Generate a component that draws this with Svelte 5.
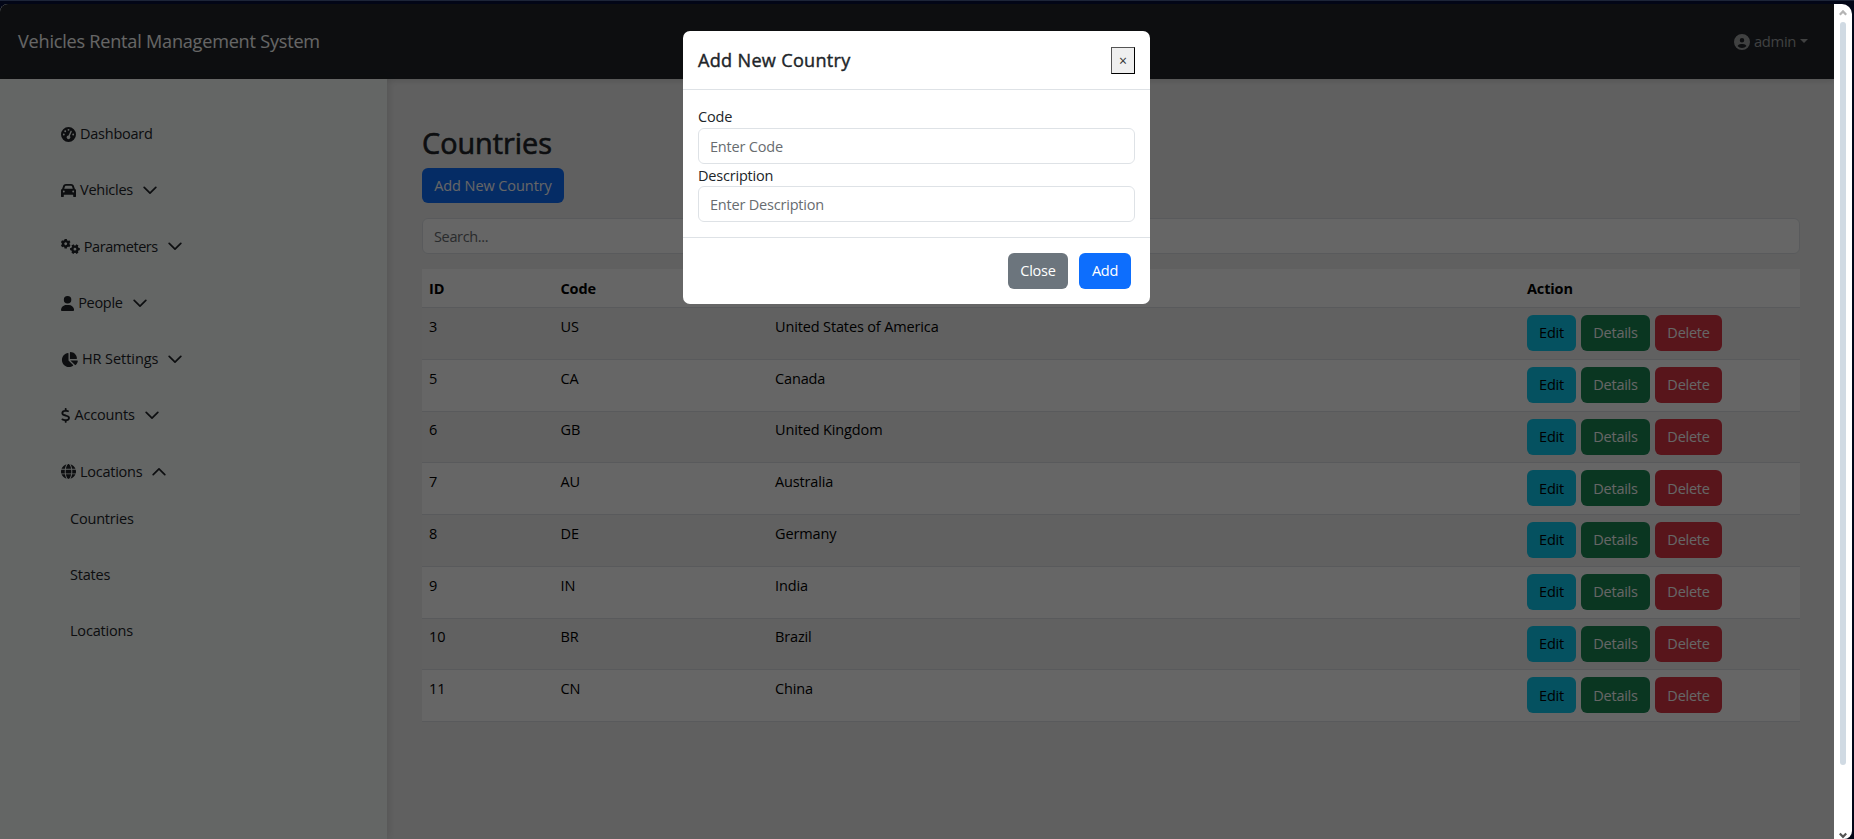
<script>
  const icons = {
    gauge: { w: 512, d: 'M0 256a256 256 0 1 1 512 0A256 256 0 1 1 0 256zM288 96a32 32 0 1 0 -64 0 32 32 0 1 0 64 0zM256 416c35.3 0 64-28.7 64-64c0-17.4-6.9-33.1-18.1-44.6L366 161.7c5.3-12.1-.2-26.3-12.3-31.6s-26.3 .2-31.6 12.3L257.9 288c-.6 0-1.3 0-1.9 0c-35.3 0-64 28.7-64 64s28.7 64 64 64zM176 144a32 32 0 1 0 -64 0 32 32 0 1 0 64 0zM96 288a32 32 0 1 0 0-64 32 32 0 1 0 0 64zm352-32a32 32 0 1 0 -64 0 32 32 0 1 0 64 0z' },
    car: { w: 512, d: 'M135.2 117.4L109.1 192H402.9l-26.1-74.6C372.3 104.6 360.2 96 346.6 96H165.4c-13.6 0-25.7 8.6-30.2 21.4zM39.6 196.8L74.8 96.3C88.3 57.8 124.6 32 165.4 32H346.6c40.8 0 77.1 25.8 90.6 64.3l35.2 100.5c23.2 9.6 39.6 32.5 39.6 59.2V400v48c0 17.7-14.3 32-32 32H448c-17.7 0-32-14.3-32-32V400H96v48c0 17.7-14.3 32-32 32H32c-17.7 0-32-14.3-32-32V400 256c0-26.7 16.4-49.6 39.6-59.2zM128 288a32 32 0 1 0 -64 0 32 32 0 1 0 64 0zm288 32a32 32 0 1 0 0-64 32 32 0 1 0 0 64z' },
    gears: { w: 640 },
    user: { w: 448, d: 'M224 256A128 128 0 1 0 224 0a128 128 0 1 0 0 256zm-45.7 48C79.8 304 0 383.8 0 482.3C0 498.7 13.3 512 29.7 512H418.3c16.4 0 29.7-13.3 29.7-29.7C448 383.8 368.2 304 269.7 304H178.3z' },
    pie: { w: 576, d: 'M304 240V16.6c0-9 7-16.6 16-16.6C443.7 0 544 100.3 544 224c0 9-7.6 16-16.6 16H304zM32 272C32 150.7 122.1 50.3 239 34.3c9.2-1.3 17 6.1 17 15.4V288L412.5 444.5c6.7 6.7 6.2 17.7-1.5 23.1C371.8 495.6 323.8 512 272 512C139.5 512 32 404.6 32 272zm526.4 16c9.3 0 16.6 7.8 15.4 17c-7.7 55.9-34.6 105.6-73.9 142.3c-6 5.6-15.4 5.2-21.2-.7L320 288H558.4z' },
    dollar: { w: 320, d: 'M160 0c17.7 0 32 14.3 32 32V67.7c1.6 .2 3.1 .4 4.7 .7c.4 .1 .7 .1 1.1 .2l48 8.8c17.4 3.2 28.9 19.9 25.7 37.2s-19.9 28.9-37.2 25.7l-47.5-8.7c-31.3-4.6-58.9-1.5-78.3 6.2s-27.2 18.3-29 28.1c-2 10.7-.5 16.7 1.2 20.4c1.8 3.9 5.5 8.3 12.8 13.2c16.3 10.7 41.3 17.7 73.7 26.3l2.9 .8c28.6 7.6 63.6 16.8 89.6 33.8c14.2 9.3 27.6 21.9 35.9 39.5c8.5 17.9 10.3 37.9 6.4 59.2c-6.9 38-33.1 63.4-65.6 76.7c-13.7 5.6-28.6 9.2-44.4 11V480c0 17.7-14.3 32-32 32s-32-14.3-32-32V445.1c-.4-.1-.9-.1-1.3-.2l-.2 0 0 0c-24.4-3.8-64.5-14.3-91.5-26.3c-16.1-7.2-23.4-26.1-16.2-42.2s26.1-23.4 42.2-16.2c20.9 9.3 55.3 18.5 75.2 21.6c31.9 4.7 58.2 2 76-5.3c16.9-6.9 24.6-16.9 26.8-28.9c1.9-10.6 .4-16.7-1.3-20.4c-1.9-4-5.6-8.4-13-13.3c-16.4-10.7-41.5-17.7-74-26.3l-2.8-.7 0 0C119.4 279.3 84.4 270 58.4 253c-14.2-9.3-27.5-22-35.8-39.6c-8.4-17.9-10.1-37.9-6.1-59.2C23.7 116 52.3 91.2 84.8 78.3c13.3-5.3 27.9-8.9 43.2-11V32c0-17.7 14.3-32 32-32z' },
    globe: { w: 512, d: 'M352 256c0 22.2-1.2 43.6-3.3 64H163.3c-2.2-20.4-3.3-41.8-3.3-64s1.2-43.6 3.3-64H348.7c2.2 20.4 3.3 41.8 3.3 64zm28.8-64H503.9c5.3 20.5 8.1 41.9 8.1 64s-2.8 43.5-8.1 64H380.8c2.1-20.6 3.2-42 3.2-64s-1.1-43.4-3.2-64zm112.6-32H376.7c-10-63.9-29.8-117.4-55.3-151.6c78.3 20.7 142 77.5 171.9 151.6zm-149.1 0H167.7c6.1-36.4 15.5-68.6 27-94.7c10.5-23.6 22.2-40.7 33.5-51.5C239.4 3.2 248.7 0 256 0s16.6 3.2 27.8 13.8c11.3 10.8 23 27.9 33.5 51.5c11.6 26 20.9 58.2 27 94.7zm-209 0H18.6C48.6 85.9 112.2 29.1 190.6 8.4C165.1 42.6 145.3 96.1 135.3 160zM8.1 192H131.2c-2.1 20.6-3.2 42-3.2 64s1.1 43.4 3.2 64H8.1C2.8 299.5 0 278.1 0 256s2.8-43.5 8.1-64zM194.7 446.6c-11.6-26-20.9-58.2-27-94.6H344.3c-6.1 36.4-15.5 68.6-27 94.6c-10.5 23.6-22.2 40.7-33.5 51.5C272.6 508.8 263.3 512 256 512s-16.6-3.2-27.8-13.8c-11.3-10.8-23-27.9-33.5-51.5zM135.3 352c10 63.9 29.8 117.4 55.3 151.6C112.2 482.9 48.6 426.1 18.6 352H135.3zm358.1 0c-30 74.1-93.6 130.9-171.9 151.6c25.5-34.2 45.2-87.7 55.3-151.6H493.4z' }
  };
  const menu = [
    { label: 'Dashboard', icon: 'gauge' },
    { label: 'Vehicles', icon: 'car', arrow: 'down' },
    { label: 'Parameters', icon: 'gears', arrow: 'down' },
    { label: 'People', icon: 'user', arrow: 'down' },
    { label: 'HR Settings', icon: 'pie', arrow: 'down' },
    { label: 'Accounts', icon: 'dollar', arrow: 'down' },
    { label: 'Locations', icon: 'globe', arrow: 'up' }
  ];
  const sub = ['Countries', 'States', 'Locations'];
  const rows = [
    [3, 'US', 'United States of America'],
    [5, 'CA', 'Canada'],
    [6, 'GB', 'United Kingdom'],
    [7, 'AU', 'Australia'],
    [8, 'DE', 'Germany'],
    [9, 'IN', 'India'],
    [10, 'BR', 'Brazil'],
    [11, 'CN', 'China']
  ];
</script>

{#snippet gear(cx, cy, turn)}
  <g transform="translate({cx} {cy}) rotate({turn})" fill="none" stroke="currentColor">
    <circle r="88" stroke-width="80" />
    {#each [0, 60, 120] as a}
      <path d="M-166 0H-100M100 0H166" stroke-width="84" transform="rotate({a})" />
    {/each}
  </g>
{/snippet}

<div class="window">
  <div class="strip"></div>
  <div class="view">
    <div class="page">
      <header>
        <span class="brand">Vehicles Rental Management System</span>
        <span class="account">
          <svg width="16" height="16" viewBox="0 0 512 512" fill="currentColor"><path d="M399 384.2C376.9 345.8 335.4 320 288 320H224c-47.4 0-88.9 25.8-111 64.2c35.2 39.2 86.2 63.8 143 63.8s107.8-24.7 143-63.8zM0 256a256 256 0 1 1 512 0A256 256 0 1 1 0 256zm256 16a72 72 0 1 0 0-144 72 72 0 1 0 0 144z" /></svg>
          <span>admin</span>
          <i class="caret"></i>
        </span>
      </header>
      <div class="columns">
        <nav>
          {#each menu as item}
            <div class="item">
              <svg class="ico" style="width:{(icons[item.icon].w / 512) * 15}px" viewBox="0 0 {icons[item.icon].w} 512" fill="currentColor">
                {#if item.icon === 'gears'}
                  {@render gear(160, 160, 30)}
                  {@render gear(476, 346, 0)}
                {:else}
                  <path d={icons[item.icon].d} />
                {/if}
              </svg>
              <span class={item.icon}>{item.label}</span>
              {#if item.arrow}
                <svg class="chev {item.arrow}" viewBox="0 0 14 9" fill="none" stroke="currentColor" stroke-width="1.7" stroke-linecap="round" stroke-linejoin="round"><path d="M1.2 1.4L7 7.2L12.8 1.4" /></svg>
              {/if}
            </div>
          {/each}
          <div class="sub">
            {#each sub as s}<div class="item">{s}</div>{/each}
          </div>
        </nav>
        <main>
          <h2>Countries</h2>
          <button class="btn primary wide">Add New Country</button>
          <input class="field search" placeholder="Search..." />
          <div class="table">
            <div class="tr head"><span>ID</span><span>Code</span><span>Description</span><span>Action</span></div>
            {#each rows as r}
              <div class="tr">
                <span>{r[0]}</span><span>{r[1]}</span><span>{r[2]}</span>
                <div class="actions">
                  <button class="btn info">Edit</button>
                  <button class="btn success">Details</button>
                  <button class="btn danger">Delete</button>
                </div>
              </div>
            {/each}
          </div>
        </main>
      </div>
      <div class="backdrop">
        <section class="modal">
          <div class="mhead"><h5>Add New Country</h5><button class="x">×</button></div>
          <div class="mbody">
            <label for="code">Code</label>
            <input id="code" class="field" placeholder="Enter Code" />
            <label for="desc">Description</label>
            <input id="desc" class="field" placeholder="Enter Description" />
          </div>
          <div class="mfoot"><button class="btn secondary">Close</button><button class="btn primary add">Add</button></div>
        </section>
      </div>
    </div>
    <div class="scroll">
      <svg width="8" height="7" viewBox="0 0 8 7" fill="none" stroke="#b4b4b4" stroke-width="2.2"><path d="M.8 5.8L4 2.4L7.2 5.8" /></svg>
      <div class="thumb"></div>
      <svg width="8" height="7" viewBox="0 0 8 7" fill="none" stroke="#555" stroke-width="2.2"><path d="M.8 1.4L4 4.8L7.2 1.4" /></svg>
    </div>
  </div>
</div>

<style>
  :global(body) { overflow: hidden; }
  * { box-sizing: border-box; }
  .window { width: 1854px; height: 839px; background: #020617; font: 14.5px/22.4px 'Open Sans', 'Noto Sans', sans-serif; letter-spacing: -0.25px; color: #212529; display: flex; flex-direction: column; overflow: hidden; }
  .strip { height: 4px; border-top: 1px solid #1d2538; flex: none; }
  .view { display: flex; flex: 1; width: 1852px; min-height: 0; border-radius: 8px 10px 8px 0; overflow: hidden; }
  .page { width: 1834px; position: relative; background: #f1f1f1; display: flex; flex-direction: column; overflow: hidden; }
  header { height: 75px; background: #212529; display: flex; align-items: center; justify-content: space-between; padding: 0 26px 0 18px; flex: none; position: relative; box-shadow: 0 2px 6px rgba(0, 0, 0, .12); }
  .brand { color: #fff; font-size: 18.1px; letter-spacing: -0.22px; }
  .account { display: flex; align-items: center; color: #a0a2a4; font-size: 14.8px; letter-spacing: -0.35px; }
  .account span { margin: 0 4px 0 4px; }
  .caret { border: 4px solid transparent; border-top-color: #a0a2a4; border-bottom: 0; margin-top: -2px; }
  .columns { flex: 1; display: flex; min-height: 0; }
  nav { position: relative; width: 387px; background: #fafefc; padding: 27px 0 0 61px; box-shadow: 1px 0 9px rgba(0, 0, 0, .14); letter-spacing: -0.25px; }
  .item { height: 56.25px; display: flex; align-items: center; }
  .item:not(:last-child) { padding-top: 0.5px; }
  .gears { letter-spacing: -0.44px; }
  .pie { letter-spacing: -0.06px; }
  .user { letter-spacing: -0.3px; }
  .dollar { letter-spacing: -0.15px; }
  .ico { height: 15px; margin-right: 4px; }
  .chev { width: 14px; height: 9px; margin-left: 10px; }
  .chev.up { transform: rotate(180deg); }
  .sub { padding-left: 9px; margin-top: -9px; letter-spacing: -0.2px; }
  main { flex: 1; padding: 46px 34px 0 35px; display: flex; flex-direction: column; align-items: flex-start; }
  h2 { margin: 0; font-size: 28.8px; line-height: 36px; font-weight: 500; letter-spacing: 0; -webkit-text-stroke: 0.65px currentColor; }
  .btn { border: 0; border-radius: 6px; font: inherit; letter-spacing: inherit; height: 36px; padding: 1px 0 0; color: #fff; text-align: center; }
  .wide { width: 142px; height: 35px; margin-top: 7px; letter-spacing: -0.08px; }
  .primary { background: #0d6efd; }
  .secondary { background: #6c757d; width: 60px; }
  .add { width: 52px; }
  .info { background: #0dcaf0; color: #000; width: 49px; }
  .success { background: #198754; width: 69px; }
  .danger { background: #dc3545; width: 67px; }
  .field { display: block; width: 100%; height: 36px; border: 1px solid #dee2e6; border-radius: 6px; background: #fff; padding: 1px 11px 0; font: inherit; letter-spacing: inherit; outline: 0; }
  .field::placeholder { color: #686c70; opacity: 1; }
  .search { margin: 15px 0; padding-top: 0; letter-spacing: -0.35px; }
  .table { width: 100%; color: #000; }
  .tr { display: grid; grid-template-columns: 131.5px 214.5px 752px 1fr; height: 51.75px; border-bottom: 1px solid #dee2e6; background: #fff; padding: 7.9px 7px 0; letter-spacing: -0.14px; }
  .tr:nth-child(even) { background: #f2f2f2; }
  .head { height: 39px; font-weight: 700; padding-top: 9px; letter-spacing: -0.15px; }
  .actions { display: flex; gap: 5px; letter-spacing: -0.25px; margin-top: -0.9px; }
  .backdrop { position: absolute; inset: 0; background: rgba(0, 0, 0, .6); padding-top: 27px; display: flex; justify-content: center; align-items: flex-start; }
  .modal { width: 467px; height: 273px; border-radius: 7px; background: #fff; margin-right: 1px; }
  .mhead { height: 59px; border-bottom: 1px solid #dee2e6; display: flex; align-items: center; justify-content: space-between; padding: 0 15px; }
  h5 { margin: 0; font-size: 18.1px; font-weight: 500; letter-spacing: 0.3px; -webkit-text-stroke: 0.4px currentColor; }
  .x { width: 24px; height: 27px; border: 1px solid #000; border-top-color: #555; border-left-color: #555; background: #efefef; padding: 2px 0 0; font: 14px/22px 'Open Sans', sans-serif; color: #333; }
  .mbody { height: 148px; border-bottom: 1px solid #dee2e6; padding: 16px 15px 0; letter-spacing: -0.2px; }
  .mbody label { display: block; height: 22px; line-height: 23px; }
  .mbody label:first-child { line-height: 21px; }
  .mfoot { display: flex; justify-content: flex-end; gap: 11px; padding: 15px 19px 0; }
  .scroll { width: 18px; background: #fff; display: flex; flex-direction: column; align-items: center; padding: 5px 0 0; }
  .scroll svg { flex: none; }
  .thumb { width: 6px; height: 743px; border-radius: 3px; background: #d0dae3; margin: 6px 0 67px; flex: none; }
</style>
